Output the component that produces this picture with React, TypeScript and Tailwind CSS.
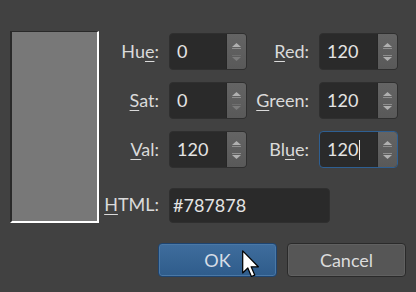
import React from "react";

const Label = ({ pre, u, post, className = "" }: { pre?: string; u: string; post: string; className?: string }) => (
  <div className={`flex h-[37px] items-center justify-end pr-[10px] text-[18px] text-[#dadada] ${className}`}>
    <span>
      {pre}
      <span className="underline underline-offset-[3px] decoration-1">{u}</span>
      {post}
    </span>
  </div>
);

const Arrows = ({ downDim }: { downDim?: boolean }) => (
  <div className="flex w-[20px] flex-col items-center justify-center gap-[6px] rounded-r-[3px] border-l border-[#262626] bg-gradient-to-b from-[#646464] to-[#595959]">
    <svg width="11" height="7" viewBox="0 0 11 7">
      <path d="M1 5 L5.5 1 L10 5 Z" fill="#b0b0b0" />
      <rect x="1" y="6" width="9" height="1" fill="#8e8e8e" />
    </svg>
    <svg width="11" height="7" viewBox="0 0 11 7">
      <rect x="1" y="0" width="9" height="1" fill={downDim ? "#6e6e6e" : "#8e8e8e"} />
      <path d="M1 2 L10 2 L5.5 6 Z" fill={downDim ? "#7c7c7c" : "#b0b0b0"} />
    </svg>
  </div>
);

const Spin = ({
  value,
  focus,
  downDim,
  className = "self-start",
}: {
  value: string;
  focus?: boolean;
  downDim?: boolean;
  className?: string;
}) => (
  <div
    className={`flex h-[37px] rounded-[4px] border ${
      focus ? "border-[#2e5f92]" : "border-[#2f2f2f]"
    } bg-[#2a2a2a] ${className}`}
  >
    <div className="flex flex-1 items-center pl-[7px] text-[18px] text-[#e4e4e4]">
      {value}
      {focus && <span className="ml-[1px] inline-block h-[20px] w-[1px] bg-[#e8e8e8]" />}
    </div>
    <Arrows downDim={downDim} />
  </div>
);

export default function App() {
  return (
    <div
      className="relative h-[292px] w-[416px] overflow-hidden bg-[#414141] pl-[10px] pt-[31px]"
      style={{ fontFamily: 'Lato, "Open Sans", sans-serif' }}
    >
      <div className="grid grid-cols-[89px_70px_78px_72px_79px] grid-rows-[39px_37px_37px_43px] gap-y-[12px]">
        <div className="row-span-4 border-b-2 border-l-2 border-r-2 border-t border-b-white border-l-[#292929] border-r-white border-t-[#292929] bg-[#787878]" />

        <Label pre="Hu" u="e" post=":" className="self-end" />
        <Spin value="0" downDim className="self-end" />
        <Label u="R" post="ed:" className="self-end" />
        <Spin value="120" className="self-end" />

        <Label u="S" post="at:" />
        <Spin value="0" downDim />
        <Label u="G" post="reen:" />
        <Spin value="120" />

        <Label u="V" post="al:" />
        <Spin value="120" />
        <Label pre="Bl" u="u" post="e:" />
        <Spin value="120" focus />

        <Label u="H" post="TML:" className="h-[35px] self-end" />
        <div className="col-span-3 flex items-end">
          <div className="flex h-[35px] w-[161px] items-center rounded-[4px] border border-[#2f2f2f] bg-[#2a2a2a] pl-[3px] text-[18px] text-[#e4e4e4]">
            #787878
          </div>
        </div>
      </div>

      <div className="mt-[20px] flex gap-[10px] pl-[148px]">
        <div className="flex h-[34px] w-[119px] items-center justify-center rounded-[4px] border border-[#1e4470] bg-gradient-to-b from-[#3f6d9d] to-[#2f5c8b] text-[18px] text-[#d6dde6] shadow-[inset_0_0_0_1px_#4a78a6]">
          OK
        </div>
        <div className="flex h-[34px] w-[119px] items-center justify-center rounded-[4px] border border-[#2a2a2a] bg-[#565656] text-[18px] text-[#dcdcdc] shadow-[inset_0_0_0_1px_#606060]">
          Cancel
        </div>
      </div>

      <svg className="absolute left-[242px] top-[250px]" width="18" height="28" viewBox="0 0 13 20">
        <path
          d="M0.5 0.5 L0.5 16.5 L4.2 12.9 L6.8 19 L9.2 18 L6.6 12 L11.8 12 Z"
          fill="#ffffff"
          stroke="#000000"
          strokeWidth="0.9"
          strokeLinejoin="round"
        />
      </svg>
    </div>
  );
}
